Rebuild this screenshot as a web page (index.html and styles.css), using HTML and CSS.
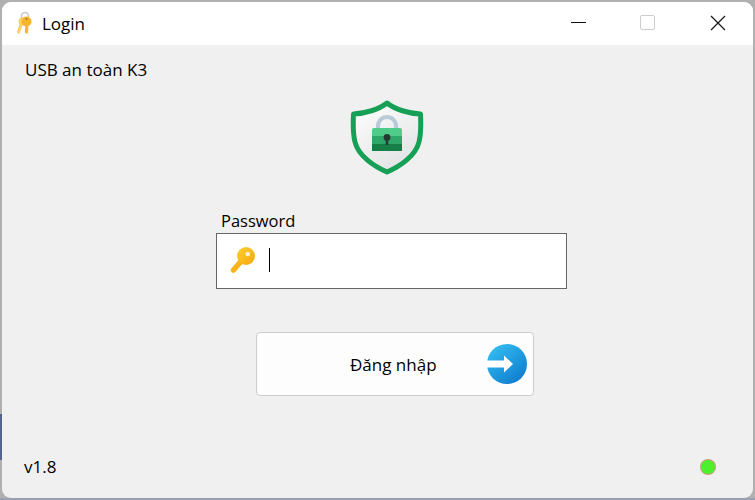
FILE: index.html
```html
<!DOCTYPE html>
<html lang="en">
<head>
    <meta charset="UTF-8">
    <title>Login</title>
    <link rel="stylesheet" href="styles.css">
</head>
<body>
    <div class="window">
        <div class="titlebar">
            <svg class="app-icon" width="20" height="24" viewBox="0 0 20 24">
                <circle cx="10" cy="5" r="3.500" fill="none" stroke="#c4c7cb" stroke-width="1.500"/>
                <path d="M7 11L3.500 21" stroke="#fad06a" stroke-width="3.200" stroke-linecap="round"/>
                <circle cx="7.500" cy="10.500" r="4" fill="#fad06a"/>
                <path d="M12 11L11.500 21" stroke="#f7b733" stroke-width="3.200" stroke-linecap="round"/>
                <circle cx="11.500" cy="10.500" r="5" fill="#f8b52a"/>
                <circle cx="11.500" cy="8" r="1.100" fill="#a9772a"/>
            </svg>
            <span class="title">Login</span>
            <div class="win-controls">
                <span class="ctl-min"></span>
                <span class="ctl-max"></span>
                <svg class="ctl-close" width="16" height="16" viewBox="0 0 16 16">
                    <path d="M1 1L15 15M15 1L1 15" stroke="#1a1a1a" stroke-width="1.300" fill="none"/>
                </svg>
            </div>
        </div>
        <div class="content">
            <div class="app-name">USB an toàn K3</div>
            <svg class="shield" width="74" height="76" viewBox="0 0 74 76">
                <defs>
                    <linearGradient id="shieldFill" x1="0" y1="0" x2="0.600" y2="1">
                        <stop offset="0" stop-color="#ffffff"/>
                        <stop offset="1" stop-color="#e2e3e4"/>
                    </linearGradient>
                </defs>
                <path d="M37 3C29 9.500 15 13.500 3.500 14C3 24 3 34 5 42C8.500 56 24 66.500 37 72C50 66.500 65.500 56 69 42C71 34 71 24 70.500 14C59 13.500 45 9.500 37 3Z" fill="url(#shieldFill)" stroke="#15a056" stroke-width="5" stroke-linejoin="round"/>
                <path d="M28 30V26a9 9 0 0 1 18 0v4" fill="none" stroke="#b9cbd9" stroke-width="4"/>
                <path d="M22 38V30a2 2 0 0 1 2-2H50a2 2 0 0 1 2 2v8Z" fill="#4fcb8a"/>
                <rect x="22" y="36" width="30" height="8" fill="#2ea868"/>
                <rect x="22" y="44" width="30" height="7" fill="#167f47"/>
                <circle cx="37" cy="37.500" r="3.400" fill="#243a33"/>
                <path d="M36 38H38L38.400 45H35.600Z" fill="#243a33"/>
            </svg>
            <div class="form">
                <label class="pw-label">Password</label>
                <div class="pw-box">
                    <svg width="26" height="28" viewBox="0 0 26 28">
                        <defs>
                            <linearGradient id="keyFill" x1="0" y1="0" x2="1" y2="1">
                                <stop offset="0" stop-color="#ffd02c"/>
                                <stop offset="1" stop-color="#f5a60f"/>
                            </linearGradient>
                        </defs>
                        <path d="M14 11L3.500 23" stroke="#f8b21a" stroke-width="5.500" stroke-linecap="round"/>
                        <circle cx="16" cy="9" r="9" fill="url(#keyFill)"/>
                        <circle cx="17.700" cy="7" r="2.300" fill="#fff4cf"/>
                    </svg>
                    <span class="caret"></span>
                </div>
            </div>
            <button class="login-btn">
                <span class="btn-text">Đăng nhập</span>
                <svg class="btn-icon" width="40" height="40" viewBox="0 0 40 40">
                    <defs>
                        <linearGradient id="blue" x1="0.100" y1="0" x2="0.900" y2="1">
                            <stop offset="0" stop-color="#35c0f2"/>
                            <stop offset="1" stop-color="#0d78cc"/>
                        </linearGradient>
                    </defs>
                    <circle cx="20" cy="20" r="20" fill="url(#blue)"/>
                    <path d="M0 16.500H17V11.500L26 20L17 28.500V23.500H0Z" fill="#fff"/>
                </svg>
            </button>
            <div class="footer">
                <span>v1.8</span>
                <span class="led"></span>
            </div>
        </div>
    </div>
</body>
</html>
```

FILE: styles.css
```css
html, body {
    margin: 0;
    padding: 0;
    width: 755px;
    height: 500px;
    overflow: hidden;
    font-family: "Open Sans", "Noto Sans", Arial, sans-serif;
    color: #000;
}
body {
    background:
        linear-gradient(#56638c, #56638c) 0 414px / 2px 46px no-repeat,
        linear-gradient(#9aa0b2, #9aa0b2) 0 498px / 755px 2px no-repeat,
        #b0b0b0;
}
.window {
    width: 751px;
    height: 496px;
    margin: 2px 0 0 2px;
    background-color: #f0f0f0;
    border-radius: 9px;
    display: flex;
    flex-direction: column;
    overflow: hidden;
}
.titlebar {
    height: 43px;
    flex: none;
    box-sizing: border-box;
    padding: 0 0 2px 13px;
    background-color: #fff;
    display: flex;
    align-items: center;
}
.app-icon {
    margin-right: 7px;
}
.title {
    font-size: 17px;
    margin-top: 1px;
}
.win-controls {
    margin-left: auto;
    display: flex;
    align-items: center;
}
.ctl-min {
    width: 15px;
    height: 1px;
    background-color: #111;
    margin-right: 54px;
}
.ctl-max {
    width: 13px;
    height: 13px;
    border: 1px solid #ccc;
    border-radius: 2px;
    margin-right: 55px;
}
.ctl-close {
    margin-right: 27px;
}
.content {
    flex: 1;
    display: flex;
    flex-direction: column;
}
.app-name {
    font-size: 17px;
    line-height: 22px;
    margin: 14px 0 0 23px;
}
.shield {
    align-self: flex-start;
    margin: 19px 0 0 348px;
}
.form {
    margin: 34px 0 0 214px;
    width: 351px;
}
.pw-label {
    display: block;
    font-size: 16.500px;
    line-height: 22px;
    margin-left: 5px;
    margin-bottom: 1px;
}
.pw-box {
    height: 54px;
    border: 1px solid #666;
    background-color: #fff;
    display: flex;
    align-items: center;
    padding-left: 13px;
}
.caret {
    width: 1px;
    height: 24px;
    background-color: #000;
    margin: 0 0 3px 13px;
}
.login-btn {
    width: 278px;
    height: 64px;
    margin: 43px 0 0 254px;
    padding: 0 6px 0 0;
    border: 1px solid #ccc;
    border-radius: 4px;
    background-color: #fdfdfd;
    display: flex;
    align-items: center;
    font-family: inherit;
    color: inherit;
}
.btn-text {
    font-size: 17px;
    margin-left: 93px;
}
.btn-icon {
    margin-left: auto;
}
.footer {
    display: flex;
    justify-content: space-between;
    align-items: center;
    font-size: 17px;
    margin: 59px 38px 0 22px;
}
.led {
    width: 14px;
    height: 14px;
    border-radius: 50%;
    background-color: #4cf02c;
    box-shadow: 0 0 0 1px #c8a080;
}
```
